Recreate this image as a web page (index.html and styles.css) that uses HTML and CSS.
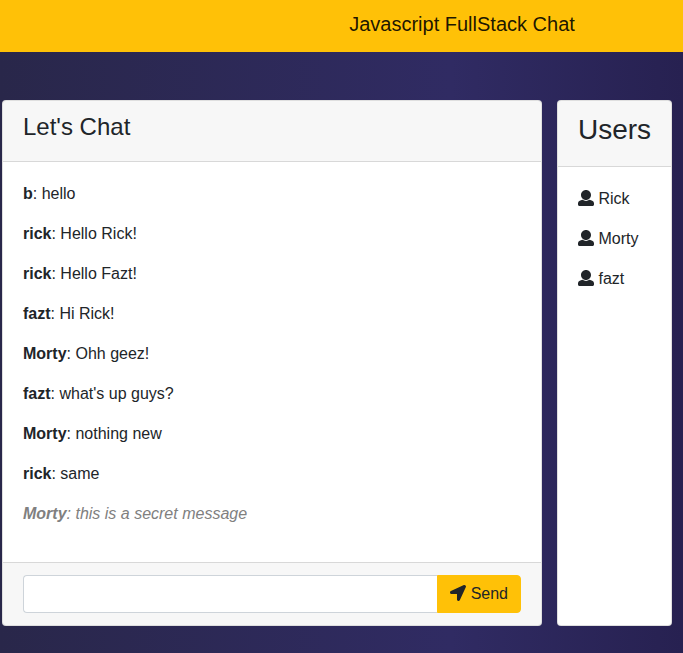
FILE: index.html
```html
<!DOCTYPE html>
<html lang="en">
<head>
  <meta charset="utf-8">
  <meta name="viewport" content="width=device-width, initial-scale=1">
  <title>Javascript FullStack Chat</title>
  <link rel="stylesheet" href="styles.css">
</head>
<body>
  <svg class="sprite" aria-hidden="true">
    <symbol id="user" viewBox="0 0 512 512"><path d="M256 0c88.366 0 160 71.634 160 160s-71.634 160-160 160S96 248.366 96 160 167.634 0 256 0zm183.283 333.821l-71.313-17.828c-74.923 53.89-165.738 41.864-223.94 0l-71.313 17.828C29.981 344.505 0 382.903 0 426.955V464c0 26.51 21.49 48 48 48h416c26.51 0 48-21.49 48-48v-37.045c0-44.052-29.981-82.45-72.717-93.134z"/></symbol>
    <symbol id="arrow" viewBox="0 0 512 512"><path d="M444.52 3.52L28.74 195.42c-47.97 22.39-31.98 92.75 19.19 92.75h175.91v175.91c0 51.17 70.36 67.17 92.75 19.19l191.9-415.78c15.99-38.39-25.59-79.97-63.97-63.97z"/></symbol>
  </svg>
  <nav class="navbar">
    <a class="brand" href="#">Javascript FullStack Chat</a>
  </nav>
  <main class="content">
    <section class="card">
      <header class="card-header"><h1 class="chat-title">Let's Chat</h1></header>
      <div class="card-body chat">
        <p><b>b</b>: hello</p>
        <p><b>rick</b>: Hello Rick!</p>
        <p><b>rick</b>: Hello Fazt!</p>
        <p><b>fazt</b>: Hi Rick!</p>
        <p><b>Morty</b>: Ohh geez!</p>
        <p><b>fazt</b>: what's up guys?</p>
        <p><b>Morty</b>: nothing new</p>
        <p><b>rick</b>: same</p>
        <p class="whisper"><b>Morty</b>: this is a secret message</p>
      </div>
      <form class="card-footer">
        <input class="message" type="text" aria-label="Message">
        <button class="send" type="submit"><svg class="icon" aria-hidden="true"><use href="#arrow"/></svg> Send</button>
      </form>
    </section>
    <section class="card">
      <header class="card-header"><h2 class="users-title">Users</h2></header>
      <div class="card-body">
        <p><svg class="icon" aria-hidden="true"><use href="#user"/></svg> Rick</p>
        <p><svg class="icon" aria-hidden="true"><use href="#user"/></svg> Morty</p>
        <p><svg class="icon" aria-hidden="true"><use href="#user"/></svg> fazt</p>
      </div>
    </section>
  </main>
</body>
</html>
```

FILE: styles.css
```css
*, *::before, *::after {
  box-sizing: border-box;
}

body {
  margin: 0;
  min-height: 100vh;
  color: #212529;
  font: 16px/24px "Liberation Sans", Arial, sans-serif;
  background: linear-gradient(to right, #29274a, #302b63 66%, #272151);
}

h1, h2, p {
  margin: 0;
}

.sprite {
  display: none;
}

.navbar {
  display: flex;
  justify-content: center;
  padding: 9px 0 13px 241px;
  background: #ffc107;
}

.brand {
  color: rgba(0, 0, 0, .9);
  font-size: 20px;
  line-height: 30px;
  text-decoration: none;
  white-space: nowrap;
}

.content {
  display: grid;
  grid-template-columns: minmax(0, 1fr) 115px;
  gap: 15px;
  padding: 48px 11px 27px 2px;
}

.card {
  display: flex;
  flex-direction: column;
  border: 1px solid rgba(0, 0, 0, .125);
  border-radius: 4px;
  background: #fff;
}

.card-header {
  padding: 12px 20px 20px;
  border-bottom: 1px solid rgba(0, 0, 0, .125);
  background: rgba(0, 0, 0, .03);
}

.chat-title {
  font-size: 24px;
  font-weight: 400;
  line-height: 28px;
}

.users-title {
  font-size: 28px;
  font-weight: 400;
  line-height: 33px;
}

.card-body {
  display: flex;
  flex: 1;
  flex-direction: column;
  gap: 16px;
  padding: 20px;
}

.chat {
  min-height: 400px;
}

.whisper {
  color: gray;
  font-style: italic;
}

.icon {
  width: 16px;
  height: 16px;
  fill: currentColor;
  vertical-align: -2px;
}

.card-footer {
  display: flex;
  padding: 12px 20px;
  border-top: 1px solid rgba(0, 0, 0, .125);
  background: rgba(0, 0, 0, .03);
}

.message {
  flex: 1;
  min-width: 0;
  height: 38px;
  padding: 6px 12px;
  border: 1px solid #ced4da;
  border-right: 0;
  border-radius: 4px 0 0 4px;
  background: #fff;
  font: inherit;
}

.send {
  padding: 6px 12px;
  border: 1px solid #ffc107;
  border-radius: 0 4px 4px 0;
  color: #212529;
  background: #ffc107;
  font: inherit;
  cursor: pointer;
}
```
